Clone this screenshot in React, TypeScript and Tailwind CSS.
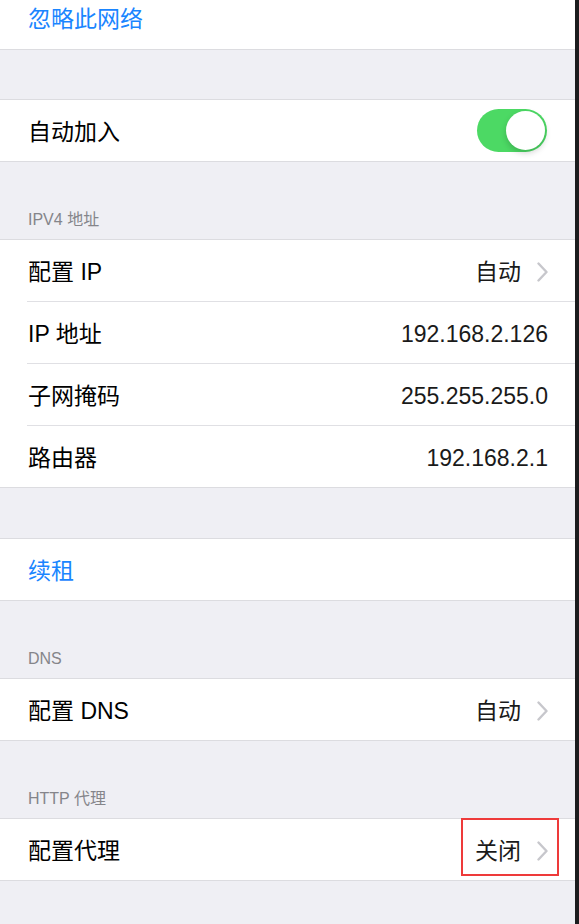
const FONT = '"Liberation Sans", "Noto Sans CJK SC", sans-serif'

function Chevron() {
  return (
    <svg width="11" height="20" viewBox="0 0 11 20" fill="none" className="ml-[16px] shrink-0">
      <path d="M1.5 1.5 L9.5 10 L1.5 18.5" stroke="#c7c7cc" strokeWidth="2.4" strokeLinecap="round" strokeLinejoin="round" />
    </svg>
  )
}

function Toggle() {
  return (
    <div className="relative h-[43px] w-[70px] rounded-full bg-[#4cd964]">
      <div className="absolute right-[2px] top-[2px] h-[39px] w-[39px] rounded-full bg-white shadow-[0_3px_6px_rgba(0,0,0,0.18)]" />
    </div>
  )
}

function Row({ label, value, chevron, blue }: { label: string; value?: string; chevron?: boolean; blue?: boolean }) {
  return (
    <div className="flex h-[61px] items-center pl-[28px] pr-[27px] pt-[3px]">
      <span className={`flex-1 text-[23px] ${blue ? 'text-[#1a85ff]' : 'text-black'}`}>{label}</span>
      {value && <span className="text-[23px] text-[#1a1a1a]">{value}</span>}
      {chevron && <Chevron />}
    </div>
  )
}

function Sep() {
  return <div className="ml-[27px] h-px bg-[#e0e0e4]" />
}

function Header({ title }: { title: string }) {
  return (
    <div className="flex h-[77px] items-end pb-[9px] pl-[28px] text-[16px] leading-[20px] text-[#85858a]">
      {title}
    </div>
  )
}

export default function App() {
  return (
    <div className="flex h-[924px] w-full overflow-hidden bg-[#efeff4]" style={{ fontFamily: FONT }}>
      <div className="flex-1">
        {/* 忽略此网络 */}
        <div className="flex h-[50px] items-center border-b border-[#dcdce0] bg-white pb-[10px] pl-[28px]">
          <span className="text-[23px] text-[#1a85ff]">忽略此网络</span>
        </div>

        <div className="h-[49px]" />

        {/* 自动加入 */}
        <div className="border-y border-[#dcdce0] bg-white">
          <div className="flex h-[61px] items-center pl-[28px] pr-[28px]">
            <span className="flex-1 pt-[3px] text-[23px] text-black">自动加入</span>
            <Toggle />
          </div>
        </div>

        <Header title="IPV4 地址" />
        <div className="border-y border-[#dcdce0] bg-white">
          <Row label="配置 IP" value="自动" chevron />
          <Sep />
          <Row label="IP 地址" value="192.168.2.126" />
          <Sep />
          <Row label="子网掩码" value="255.255.255.0" />
          <Sep />
          <Row label="路由器" value="192.168.2.1" />
        </div>

        <div className="h-[50px]" />

        <div className="border-y border-[#dcdce0] bg-white">
          <Row label="续租" blue />
        </div>

        <Header title="DNS" />
        <div className="border-y border-[#dcdce0] bg-white">
          <Row label="配置 DNS" value="自动" chevron />
        </div>

        <Header title="HTTP 代理" />
        <div className="relative border-y border-[#dcdce0] bg-white">
          <Row label="配置代理" value="关闭" chevron />
          <div className="absolute right-[16px] top-[-1px] h-[58px] w-[98px] border-2 border-[#ee3a3a]" />
        </div>
      </div>
      <div className="w-[4px] bg-[#1c1c1e]" />
    </div>
  )
}
